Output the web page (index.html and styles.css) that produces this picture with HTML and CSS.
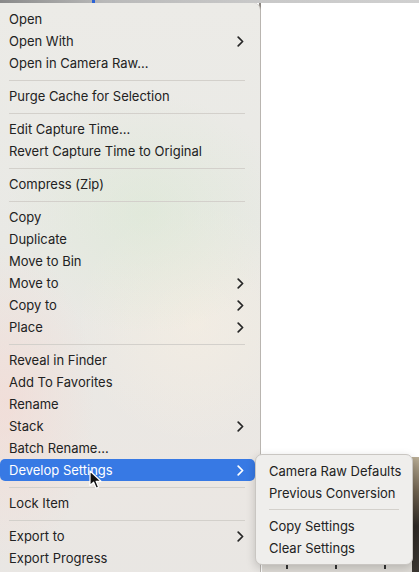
FILE: index.html
```html
<!DOCTYPE html>
<html>
<head>
<meta charset="utf-8">
<link rel="stylesheet" href="styles.css">
</head>
<body>
<div class="screen">
  <div class="topbar"><span class="dot"></span></div>
  <div class="page"></div>
  <div class="thumb"><div class="thumb-edge"></div><div class="marks"><span></span><span></span><span></span></div></div>

  <div class="menu">
    <div class="item">Open</div>
    <div class="item">Open With<span class="chev"><svg width="7" height="11" viewBox="0 0 7 11"><path d="M1.2 1.2 L5.6 5.5 L1.2 9.8"/></svg></span></div>
    <div class="item">Open in Camera Raw...</div>
    <div class="sep"></div>
    <div class="item">Purge Cache for Selection</div>
    <div class="sep"></div>
    <div class="item">Edit Capture Time...</div>
    <div class="item">Revert Capture Time to Original</div>
    <div class="sep"></div>
    <div class="item">Compress (Zip)</div>
    <div class="sep"></div>
    <div class="item">Copy</div>
    <div class="item">Duplicate</div>
    <div class="item">Move to Bin</div>
    <div class="item">Move to<span class="chev"><svg width="7" height="11" viewBox="0 0 7 11"><path d="M1.2 1.2 L5.6 5.5 L1.2 9.8"/></svg></span></div>
    <div class="item">Copy to<span class="chev"><svg width="7" height="11" viewBox="0 0 7 11"><path d="M1.2 1.2 L5.6 5.5 L1.2 9.8"/></svg></span></div>
    <div class="item">Place<span class="chev"><svg width="7" height="11" viewBox="0 0 7 11"><path d="M1.2 1.2 L5.6 5.5 L1.2 9.8"/></svg></span></div>
    <div class="sep"></div>
    <div class="item">Reveal in Finder</div>
    <div class="item">Add To Favorites</div>
    <div class="item">Rename</div>
    <div class="item">Stack<span class="chev"><svg width="7" height="11" viewBox="0 0 7 11"><path d="M1.2 1.2 L5.6 5.5 L1.2 9.8"/></svg></span></div>
    <div class="item">Batch Rename...</div>
    <div class="item active">Develop Settings<span class="chev"><svg width="7" height="11" viewBox="0 0 7 11"><path d="M1.2 1.2 L5.6 5.5 L1.2 9.8"/></svg></span></div>
    <div class="sep"></div>
    <div class="item">Lock Item</div>
    <div class="sep"></div>
    <div class="item">Export to<span class="chev"><svg width="7" height="11" viewBox="0 0 7 11"><path d="M1.2 1.2 L5.6 5.5 L1.2 9.8"/></svg></span></div>
    <div class="item">Export Progress</div>
  </div>

  <div class="submenu">
    <div class="item">Camera Raw Defaults</div>
    <div class="item">Previous Conversion</div>
    <div class="sep"></div>
    <div class="item">Copy Settings</div>
    <div class="item">Clear Settings</div>
  </div>

  <svg class="cursor" width="14" height="20" viewBox="0 0 14 20">
    <path d="M1 1 L1 15.5 L4.6 12.2 L7.2 18.2 L9.6 17.2 L7.1 11.3 L12 11.3 Z" fill="#111" stroke="#fff" stroke-width="1.2" stroke-linejoin="round"/>
  </svg>
</div>
</body>
</html>
```
FILE: styles.css
```css
* { box-sizing: border-box; }
html, body { margin: 0; padding: 0; }
body {
  width: 419px;
  height: 572px;
  overflow: hidden;
  background: #ffffff;
  font-family: Inter, "Liberation Sans", Arial, sans-serif;
}
.screen {
  position: relative;
  width: 419px;
  height: 572px;
  overflow: hidden;
  display: flex;
  flex-direction: column;
}
.topbar {
  height: 3px;
  background: linear-gradient(90deg, #8a8a8a 0, #b9b9b9 25%, #c8c8c8 60%, #d0d0d0 100%);
  position: relative;
}
.dot {
  position: absolute;
  left: 92px;
  top: 0;
  width: 3px;
  height: 3px;
  background: #2c63d6;
}
.page {
  flex: 1;
  background: #ffffff;
  border-left: 2px solid #8c8782;
  margin-left: 259px;
}
.thumb {
  position: absolute;
  left: 262px;
  top: 457px;
  width: 157px;
  height: 115px;
  background: #dedbd6;
}
.thumb-edge {
  position: absolute;
  right: 0;
  top: 0;
  width: 7px;
  height: 115px;
  background: linear-gradient(180deg, #b9ad95 0, #6f6250 30%, #2e2a26 60%, #3a3631 100%);
}
.marks {
  position: absolute;
  left: 0;
  right: 10px;
  bottom: 3px;
  display: flex;
  justify-content: space-around;
}
.marks span {
  width: 2px;
  height: 4px;
  background: #333;
}
.menu {
  position: absolute;
  left: -5px;
  top: 3px;
  width: 266px;
  height: 600px;
  padding: 5px 5px;
  border-radius: 0 7px 0 0;
  border-right: 1px solid #b9b5b0;
  background:
    radial-gradient(ellipse 90px 160px at 10px 400px, rgba(246, 214, 208, 0.55), rgba(246, 214, 208, 0) 100%),
    radial-gradient(ellipse 140px 120px at 150px 210px, rgba(214, 232, 206, 0.45), rgba(214, 232, 206, 0) 100%),
    radial-gradient(ellipse 120px 120px at 200px 320px, rgba(250, 240, 225, 0.5), rgba(250, 240, 225, 0) 100%),
    linear-gradient(180deg, #ecebe7 0, #e9e9e5 40%, #ebe7e3 80%, #e8e6e3 100%);
  color: #222222;
  font-size: 13px;
}
.item {
  height: 22px;
  line-height: 22px;
  padding: 0 11px 0 9px;
  display: flex;
  align-items: center;
  justify-content: space-between;
  border-radius: 5px;
  white-space: nowrap;
}
.chev {
  display: flex;
  align-items: center;
}
.chev svg path {
  fill: none;
  stroke: #262626;
  stroke-width: 1.7;
  stroke-linecap: round;
  stroke-linejoin: round;
}
.item.active {
  background: #3779e4;
  color: #ffffff;
}
.item.active .chev svg path { stroke: #ffffff; }
.sep {
  height: 11px;
  display: flex;
  align-items: center;
  padding: 0 10px 0 9px;
}
.sep::before {
  content: "";
  flex: 1;
  height: 1px;
  background: #d3d0cb;
}
.menu .sep::before { margin-top: 1px; }
.submenu {
  position: absolute;
  left: 255px;
  top: 454px;
  width: 158px;
  padding: 5px 4px 5px 5px;
  border-radius: 7px;
  background: #efeeec;
  border: 0.5px solid #c9c6c2;
  box-shadow: 0 3px 10px rgba(0, 0, 0, 0.18);
  color: #222222;
  font-size: 13px;
}
.submenu .item { padding-left: 8px; }
.submenu .sep { padding: 0 9px 0 8px; }
.cursor {
  position: absolute;
  left: 89px;
  top: 470px;
}
```
